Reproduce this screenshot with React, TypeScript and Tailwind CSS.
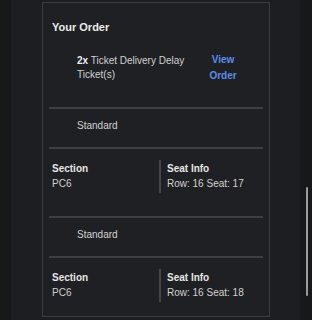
const seats = [
  { section: "PC6", seat: "Row: 16 Seat: 17" },
  { section: "PC6", seat: "Row: 16 Seat: 18" },
];

export default function App() {
  return (
    <div className="flex h-[320px] w-[312px] overflow-hidden bg-[#1d1e21] font-['Liberation_Sans',Arial,sans-serif]">
      <div className="w-[11px] shrink-0 bg-[#17181a]" />
      <div className="flex flex-1 pl-[31px] pt-[2px]">
        <div className="h-[315px] w-[228px] shrink-0 border border-[#3b3c40] bg-[#1f2024] px-[9px] pt-[16px]">
          <h2 className="text-[11px] leading-[16px] font-bold text-[#ececec]">Your Order</h2>
          <div className="mt-[17px] flex pl-[25px]">
            <p className="w-[115px] pt-[2px] text-[10px] leading-[14px] text-[#d2d2d2]">
              <span className="font-bold text-[#ececec]">2x</span> Ticket Delivery Delay Ticket(s)
            </p>
            <a className="ml-[11px] w-[40px] text-center text-[10px] leading-[16px] font-bold text-[#5a8ee8]">
              View Order
            </a>
          </div>
          {seats.map((s, i) => (
            <div key={i} className={i === 0 ? "mt-[23px]" : "mt-[23px]"}>
              <div className="mx-[-3px] h-[2px] bg-[#3e3f43]" />
              <p className="pt-[10px] pb-[14px] pl-[25px] text-[10px] leading-[14px] text-[#d2d2d2]">Standard</p>
              <div className="mx-[-3px] h-[2px] bg-[#3e3f43]" />
              <div className="mt-[11px] flex">
                <div className="w-[107px] pt-[1px] text-[10px] leading-[15px]">
                  <p className="font-bold text-[#e6e6e6]">Section</p>
                  <p className="text-[#d2d2d2]">{s.section}</p>
                </div>
                <div className="flex-1 border-l-2 border-[#45464a] pt-[1px] pb-[2px] pl-[6px] text-[10px] leading-[15px]">
                  <p className="font-bold text-[#e6e6e6]">Seat Info</p>
                  <p className="text-[#d2d2d2]">{s.seat}</p>
                </div>
              </div>
            </div>
          ))}
        </div>
      </div>
      <div className="relative w-[12px] shrink-0 bg-[#17181a]">
        <div className="absolute left-[6px] top-[187px] h-[109px] w-[2px] rounded bg-[#9a9a9c]" />
      </div>
    </div>
  );
}
